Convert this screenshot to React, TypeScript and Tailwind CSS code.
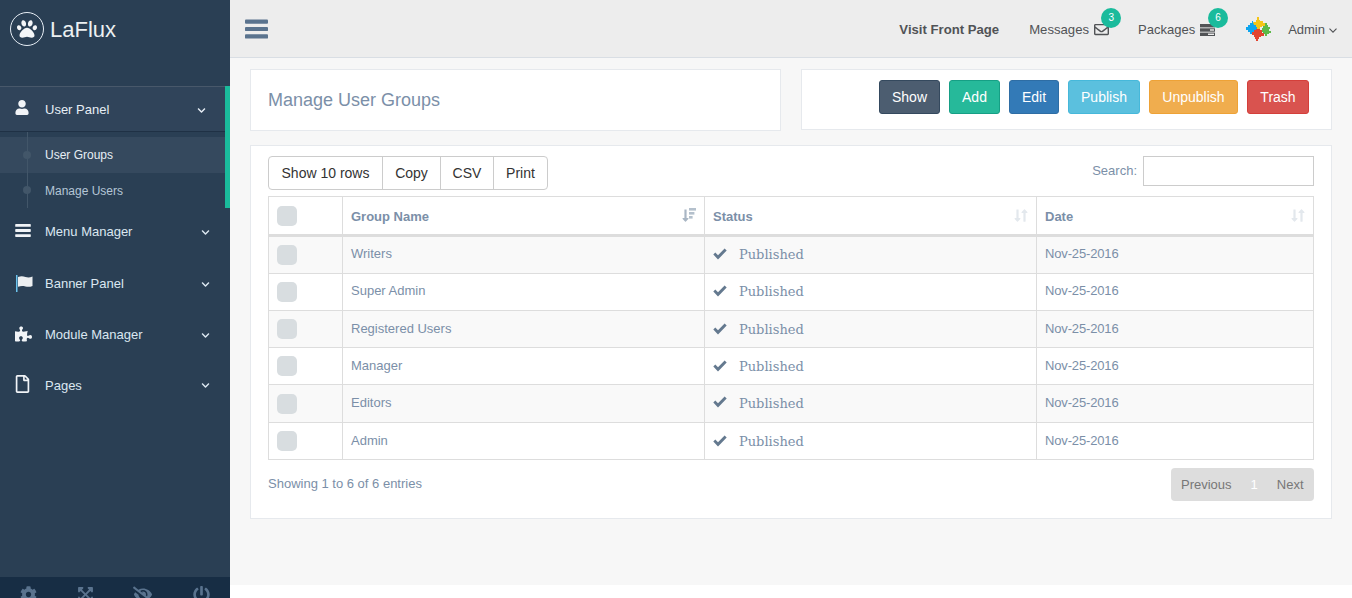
import React from "react";
import { FaUser, FaPuzzlePiece, FaCog, FaExpandArrowsAlt, FaEyeSlash, FaPowerOff, FaPaw, FaChevronDown, FaRegFile, FaRegEnvelope, FaLongArrowAltDown, FaLongArrowAltUp } from "react-icons/fa";

const Bars = ({ className }: { className: string }) => (
  <svg viewBox="0 0 24 20" className={className} fill="currentColor">
    <rect x="0" y="0" width="24" height="4.4" rx="1" />
    <rect x="0" y="7.8" width="24" height="4.4" rx="1" />
    <rect x="0" y="15.6" width="24" height="4.4" rx="1" />
  </svg>
);

const Check = () => (
  <svg viewBox="0 0 14 12" className="h-[12px] w-[14px] text-[#64798f]" fill="currentColor">
    <path d="M0.3 6.6 L2.3 4.6 L5 7.3 L11.6 0.6 L13.7 2.6 L5 11.4 Z" />
  </svg>
);

const Flag = () => (
  <svg viewBox="0 0 18 17" className="h-[17px] w-[18px]">
    <rect x="1" y="0" width="1.5" height="17" fill="#6cc4ee" />
    <path d="M3 2 C6 1 8 1.2 10.5 2 C13 2.8 15 2.6 17.5 1.5 L17.5 11 C15 12 13 12 10.5 11.5 C8 11 6 10.8 3 11.8 Z" fill="#eceff1" />
  </svg>
);

const Puzzle = () => (
  <svg viewBox="0 0 26 26" className="h-[26px] w-[26px]">
    <path d="M1 11h2V9h2V7h2V5h1v2h2l2 3v4H9v2H7v2H5v-2H3v-2H1z" fill="#0ea5ee" />
    <path d="M8 6h3V4h1V1h2v3h1v1h3v2h2v3h-3v1h-2v2h-3v-2h-1V9H9z" fill="#f5c518" />
    <path d="M18 10h2V7h2v2h1v2h2v2h-1v2h2v2h-2v1h-2v2h-2v-2h-2v-2h-1v-4h1z" fill="#5cb948" />
    <path d="M7 16h2v-2h2v-1h4v1h2v3h2v3h-3v1h-2v2h-1v2h-2v-2h-1v-2H9v-2H7z" fill="#e2432e" />
  </svg>
);

const SortIcon = ({ active }: { active?: boolean }) => (
  <span className="flex items-start">
    {active ? (
      <>
        <FaLongArrowAltDown className="h-[15px] w-[7px] text-[#a9b6c4]" />
        <svg viewBox="0 0 7 14" className="h-[14px] w-[7px] text-[#b4c0cc]" fill="currentColor">
          <rect x="0" y="0" width="7" height="2.6" />
          <rect x="0" y="4" width="5.4" height="2.6" />
          <rect x="0" y="8" width="3.6" height="2.6" />
        </svg>
      </>
    ) : (
      <>
        <FaLongArrowAltDown className="h-[15px] w-[7px] text-[#e3e8ed]" />
        <FaLongArrowAltUp className="h-[15px] w-[7px] text-[#e3e8ed]" />
      </>
    )}
  </span>
);

const menu = [
  { label: "Menu Manager", icon: <Bars className="mb-[3px] h-[13px] w-[16px]" />, h: "h-[52px]" },
  { label: "Banner Panel", icon: <span className="mb-[2px]"><Flag /></span>, h: "h-[52px]" },
  { label: "Module Manager", icon: <FaPuzzlePiece className="mb-[3px] h-[16px] w-[17px]" />, h: "h-[50px]" },
  { label: "Pages", icon: <FaRegFile className="mb-[3px] h-[18px] w-[15px]" />, h: "h-[51px]" },
];

const rows = [
  { name: "Writers", h: "h-[38px]", n: "pb-[2px]", s: "pb-0" },
  { name: "Super Admin", h: "h-[37px]", n: "pb-[2px]", s: "pb-0" },
  { name: "Registered Users", h: "h-[37px]", n: "pb-0", s: "pt-[2px]" },
  { name: "Manager", h: "h-[37px]", n: "pb-0", s: "pt-[2px]" },
  { name: "Editors", h: "h-[38px]", n: "pb-[2px]", s: "pb-0" },
  { name: "Admin", h: "h-[37px]", n: "pb-0", s: "pt-[2px]" },
];

const buttons = [
  { t: "Show", c: "w-[61px] bg-[#4c5d70] border-[#34495e]" },
  { t: "Add", c: "w-[51px] bg-[#26b99a] border-[#169f85]" },
  { t: "Edit", c: "w-[50px] bg-[#337ab7] border-[#2e6da4]" },
  { t: "Publish", c: "w-[72px] bg-[#5bc0de] border-[#46b8da]" },
  { t: "Unpublish", c: "w-[89px] bg-[#f0ad4e] border-[#eea236]" },
  { t: "Trash", c: "w-[62px] bg-[#d9534f] border-[#d43f3a]" },
];

const Chk = () => <span className="block h-[20px] w-[20px] rounded-[5px] bg-[#d8dde0]" />;

export default function App() {
  return (
    <div className="flex h-[598px] w-[1352px] overflow-hidden bg-white font-['Liberation_Sans',Arial,sans-serif] text-[13px] text-[#7b8fa8]">
      <aside className="flex w-[230px] shrink-0 flex-col bg-[#2a3f54] text-[#e7eef5]">
        <div className="flex h-[86px] items-start pl-[10px] pt-[12px]">
          <span className="flex h-[34px] w-[34px] items-center justify-center rounded-full border border-[#e7eef5]">
            <FaPaw className="h-[20px] w-[20px] text-[#f4f6f8]" />
          </span>
          <span className="ml-[6px] mt-[5px] text-[22px] leading-[26px] text-[#ecf0f1]">LaFlux</span>
        </div>

        <div className="border-r-[5px] border-[#1abb9c]">
          <div className="flex h-[46px] items-center border-y border-t-[#48586a] border-b-[#1f3145] bg-[#33475c]/70 pl-[15px] pr-[19px] pt-[2px]">
            <FaUser className="mb-[5px] h-[15px] w-[14px] text-[#f1f4f7]" />
            <span className="ml-[16px] flex-1">User Panel</span>
            <FaChevronDown className="h-[9px] w-[9px]" />
          </div>
          <div className="relative pt-[5px]">
            <span className="absolute bottom-0 left-[27px] top-0 w-px bg-[#425669]" />
            <div className="flex h-[36px] items-center bg-[#35495e] pl-[45px] text-[12px] text-[#e7eef5]">
              <span className="absolute left-[23px] h-[8px] w-[8px] rounded-full bg-[#425669]" />
              User Groups
            </div>
            <div className="flex h-[35px] items-start pl-[45px] pt-[9px] text-[12px] text-[#b5c6d6]">
              <span className="absolute left-[23px] mt-[4px] h-[8px] w-[8px] rounded-full bg-[#425669]" />
              Manage Users
            </div>
          </div>
        </div>

        <nav className="-mt-[2px] text-[#dbe7f1]">
          {menu.map((m) => (
            <div key={m.label} className={`flex ${m.h} items-center pl-[15px] pr-[20px]`}>
              <span className="flex w-[30px] items-center text-[#f1f4f7]">{m.icon}</span>
              <span className="flex-1">{m.label}</span>
              <FaChevronDown className="h-[9px] w-[9px]" />
            </div>
          ))}
        </nav>

        <div className="flex-1" />
        <div className="flex h-[21px] items-start justify-between overflow-hidden bg-[#172d44] px-[20px] pt-[9px] text-[#5a738e]">
          <FaCog className="h-[17px] w-[17px]" />
          <FaExpandArrowsAlt className="h-[17px] w-[17px]" />
          <FaEyeSlash className="h-[17px] w-[20px]" />
          <FaPowerOff className="h-[17px] w-[17px]" />
        </div>
      </aside>

      <main className="flex w-[1122px] min-w-0 flex-col">
        <header className="flex h-[58px] shrink-0 items-center border-b border-[#d9dee4] bg-[#ededed] pl-[15px] pr-[15px] pt-[2px] text-[13px] text-[#515356]">
          <span className="-mt-[2px] flex"><Bars className="h-[20px] w-[23px] text-[#5a738e]" /></span>
          <div className="flex-1" />
          <a className="text-[13.15px] font-bold">Visit Front Page</a>
          <span className="relative ml-[30px] flex items-center text-[13.15px]">
            Messages
            <FaRegEnvelope className="ml-[5px] h-[15px] w-[15px]" />
            <span className="absolute -top-[12px] left-[72px] flex h-[20px] w-[20px] items-center justify-center rounded-full bg-[#1abb9c] text-[10px] text-white">3</span>
          </span>
          <span className="relative ml-[29px] flex items-center">
            Packages
            <svg viewBox="0 0 15 12" className="ml-[5px] h-[12px] w-[15px]">
              <rect width="15" height="3.4" fill="#515356" />
              <rect y="4.3" width="15" height="3.4" fill="#515356" />
              <rect x="10" y="5.3" width="4" height="1.4" fill="#ededed" />
              <rect y="8.6" width="15" height="3.4" fill="#515356" />
              <rect x="8" y="9.6" width="6" height="1.4" fill="#ededed" />
            </svg>
            <span className="absolute -top-[12px] left-[70px] flex h-[20px] w-[20px] items-center justify-center rounded-full bg-[#1abb9c] text-[10px] text-white">6</span>
          </span>
          <span className="-mt-[2px] ml-[30px] flex"><Puzzle /></span>
          <span className="ml-[17px] flex items-center">
            Admin
            <svg viewBox="0 0 8 5" className="ml-[4px] mt-[1px] h-[5px] w-[8px]" fill="none" stroke="currentColor" strokeWidth="1.1">
              <path d="M0.5 0.7 L4 4.2 L7.5 0.7" />
            </svg>
          </span>
        </header>

        <div className="h-[527px] shrink-0 bg-[#f7f7f7] px-[20px] pt-[11px]">
          <div className="flex gap-[20px]">
            <section className="flex h-[62px] w-[531px] items-center border border-[#e6e9ed] bg-white pl-[17px] text-[18px]">
              Manage User Groups
            </section>
            <section className="flex h-[61px] w-[531px] items-start justify-end gap-[9px] border border-[#e6e9ed] bg-white pr-[22px] pt-[10px]">
              {buttons.map((b) => (
                <button key={b.t} className={`h-[34px] rounded-[3px] border text-[14px] text-white ${b.c}`}>
                  {b.t}
                </button>
              ))}
            </section>
          </div>

          <section className="mt-[14px] h-[374px] border border-[#e6e9ed] bg-white px-[17px] pt-[10px]">
            <div className="flex items-start justify-between">
              <div className="flex h-[34px] rounded-[4px] border border-[#ccc] text-[14px] text-[#333]">
                <span className="flex w-[113px] items-center justify-center">Show 10 rows</span>
                <span className="flex w-[58px] items-center justify-center border-l border-[#ccc]">Copy</span>
                <span className="flex w-[53px] items-center justify-center border-l border-[#ccc]">CSV</span>
                <span className="flex w-[54px] items-center justify-center border-l border-[#ccc]">Print</span>
              </div>
              <label className="flex items-center">
                Search:
                <span className="ml-[6px] block h-[30px] w-[171px] border border-[#ccc] bg-white" />
              </label>
            </div>

            <table className="mt-[6px] w-[1045px] table-fixed border-collapse border border-[#ddd]">
              <colgroup>
                <col className="w-[74px]" />
                <col className="w-[362px]" />
                <col className="w-[332px]" />
                <col className="w-[277px]" />
              </colgroup>
              <thead>
                <tr className="h-[39px] border-b-[3px] border-[#ddd] text-left">
                  <th className="border-r border-[#ddd] px-[8px]"><Chk /></th>
                  <th className="border-r border-[#ddd] px-[8px] pt-[2px]">
                    <span className="flex items-center justify-between"><span>Group Name</span><span className="-mt-[3px]"><SortIcon active /></span></span>
                  </th>
                  <th className="border-r border-[#ddd] px-[8px] pt-[2px]">
                    <span className="flex items-center justify-between"><span>Status</span><span className="-mt-[3px]"><SortIcon /></span></span>
                  </th>
                  <th className="px-[8px] pt-[2px]">
                    <span className="flex items-center justify-between"><span>Date</span><span className="-mt-[3px]"><SortIcon /></span></span>
                  </th>
                </tr>
              </thead>
              <tbody>
                {rows.map((r, i) => (
                  <tr key={r.name} className={`${r.h} border-b border-[#ddd] ${i % 2 === 0 ? "bg-[#f9f9f9]" : "bg-white"}`}>
                    <td className="border-r border-[#ddd] px-[8px]"><Chk /></td>
                    <td className={`border-r border-[#ddd] px-[8px] ${r.n}`}>{r.name}</td>
                    <td className={`border-r border-[#ddd] px-[8px] ${r.s}`}>
                      <span className="flex items-center">
                        <span className="mb-[3px] flex"><Check /></span>
                        <span className="ml-[12px] font-['DejaVu_Serif',serif] text-[13px]">Published</span>
                      </span>
                    </td>
                    <td className={`px-[8px] tracking-[-0.15px] ${r.n}`}>Nov-25-2016</td>
                  </tr>
                ))}
              </tbody>
            </table>

            <div className="mt-[8px] flex items-start justify-between">
              <span className="mt-[6px]">Showing 1 to 6 of 6 entries</span>
              <div className="flex h-[33px] w-[143px] items-center rounded-[4px] bg-[#ddd] text-[13px] text-[#777]">
                <span className="ml-[10px]">Previous</span>
                <span className="ml-[19px] text-white">1</span>
                <span className="ml-[19px]">Next</span>
              </div>
            </div>
          </section>
        </div>
      </main>
    </div>
  );
}
